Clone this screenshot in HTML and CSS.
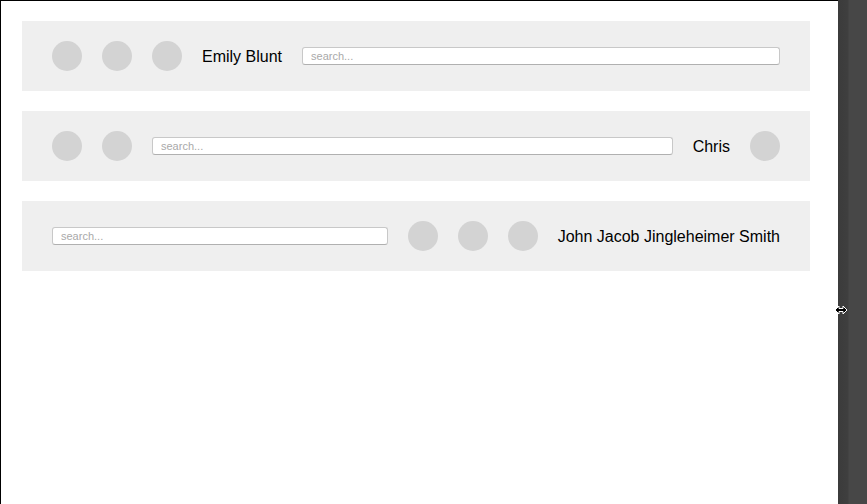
FILE: index.html
```html
<!DOCTYPE html>
<html>
<head>
<meta charset="utf-8">
<link rel="stylesheet" href="styles.css">
</head>
<body>
<div class="screen">
  <main class="page">
    <div class="bar">
      <span class="avatar"></span>
      <span class="avatar"></span>
      <span class="avatar"></span>
      <span class="name">Emily Blunt</span>
      <input class="search" type="text" placeholder="search...">
    </div>
    <div class="bar">
      <span class="avatar"></span>
      <span class="avatar"></span>
      <input class="search" type="text" placeholder="search...">
      <span class="name">Chris</span>
      <span class="avatar"></span>
    </div>
    <div class="bar">
      <input class="search" type="text" placeholder="search...">
      <span class="avatar"></span>
      <span class="avatar"></span>
      <span class="avatar"></span>
      <span class="name">John Jacob Jingleheimer Smith</span>
    </div>
  </main>
  <aside class="strip">
    <svg class="cursor" width="14" height="10" viewBox="0 0 14 10">
      <path d="M1 5 L5 1 L5 3.5 L9 3.5 L9 1 L13 5 L9 9 L9 6.5 L5 6.5 L5 9 Z" fill="#000" stroke="#fff" stroke-width="1"/>
    </svg>
  </aside>
</div>
</body>
</html>
```
FILE: styles.css
```css
html, body {
  margin: 0;
  padding: 0;
  height: 100%;
}
body {
  font-family: "Liberation Sans", Arial, sans-serif;
  background: #fff;
}
.screen {
  display: flex;
  height: 504px;
  width: 867px;
  overflow: hidden;
}
.page {
  flex: 0 0 838px;
  box-sizing: border-box;
  border-top: 1px solid #000;
  border-left: 1px solid #000;
  background: #fff;
  padding: 20px 28px 0 21px;
  display: flex;
  flex-direction: column;
  gap: 20px;
}
.bar {
  height: 70px;
  background: #efefef;
  display: flex;
  align-items: center;
  gap: 20px;
  padding: 0 30px 0 30px;
  box-sizing: border-box;
}
.avatar {
  flex: 0 0 30px;
  width: 30px;
  height: 30px;
  border-radius: 50%;
  background: #d3d3d3;
}
.name {
  font-size: 16px;
  color: #000;
  white-space: nowrap;
  margin-top: 1px;
}
.search {
  flex: 1 1 auto;
  min-width: 0;
  height: 18px;
  box-sizing: border-box;
  margin: 0;
  padding: 0 8px;
  border: 1px solid #c8c8c8;
  border-bottom-color: #b0b0b0;
  border-radius: 3px;
  background: #fff;
  font-family: "Liberation Sans", Arial, sans-serif;
  font-size: 11px;
  outline: none;
}
.search::placeholder {
  color: #a9a9a9;
}
.strip {
  position: relative;
  flex: 1 1 auto;
  background: linear-gradient(to right, #3b3b3b 0, #3f3f3f 10px, #474747 11px, #474747 100%);
}
.cursor {
  position: absolute;
  left: -4px;
  top: 305px;
}
```
